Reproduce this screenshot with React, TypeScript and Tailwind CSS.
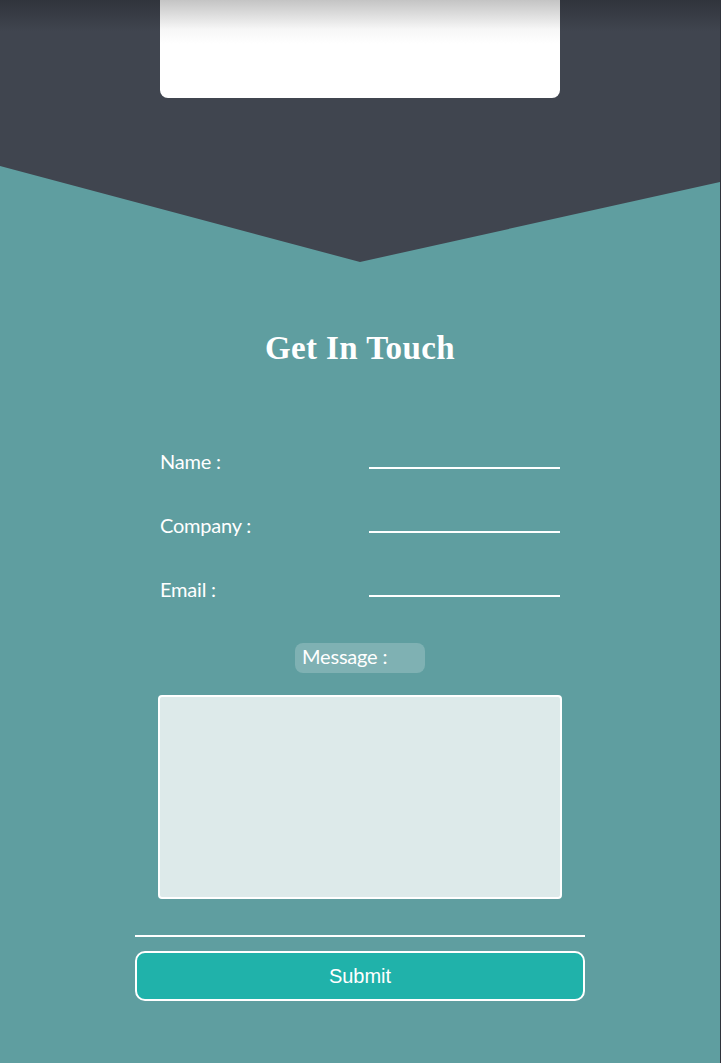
import React from 'react';

const fields = ['Name :', 'Company :', 'Email :'];

const App: React.FC = () => {
  return (
    <div className="w-[721px] min-h-[1063px] bg-[#5f9ea0] border-r border-[#2f333b] font-['Lato',sans-serif]">
      {/* header with chevron bottom */}
      <div className="h-[262px] bg-[#5f9ea0]">
        <div className="h-full bg-linear-to-b from-[#30343c] to-[#40454f] to-[12%] [clip-path:polygon(0_0,100%_0,100%_182px,50%_100%,0_166px)]">
          <div className="mx-auto w-[400px] h-[98px] rounded-b-lg bg-linear-to-b from-[#c4c4c4] via-[#f7f7f7] via-[30%] to-white to-[45%]" />
        </div>
      </div>

      <div className="w-[720px] flex flex-col items-center">
        <h1 className="mt-[64px] text-white text-[33px] font-bold font-['Liberation_Serif',serif] leading-[44px] tracking-[0.4px]">
          Get In Touch
        </h1>

        <div className="mt-[70px] w-[400px] flex flex-col gap-[36px]">
          {fields.map((f) => (
            <div key={f} className="flex items-end justify-between h-[28px]">
              <label className="text-white text-[20px] leading-[24px] mb-[-5px] tracking-[-0.2px]">{f}</label>
              <div className="w-[191px] h-[2px] bg-white mb-[-1px]" />
            </div>
          ))}
        </div>

        <div className="mt-[47px] w-[130px] h-[30px] rounded-lg bg-white/20 pl-[7px] text-white text-[20px] leading-[26px] tracking-[-0.2px]">
          Message :
        </div>

        <div className="mt-[22px] w-[404px] h-[204px] rounded border-2 border-white bg-[#ddeaea]" />

        <div className="mt-[36px] w-[450px] h-[2px] bg-white" />

        <button className="mt-[14px] w-[450px] h-[50px] rounded-[10px] border-2 border-white bg-[#20b2aa] text-white text-[20px] font-['Liberation_Sans',sans-serif]">
          Submit
        </button>
      </div>
    </div>
  );
};

export default App;
